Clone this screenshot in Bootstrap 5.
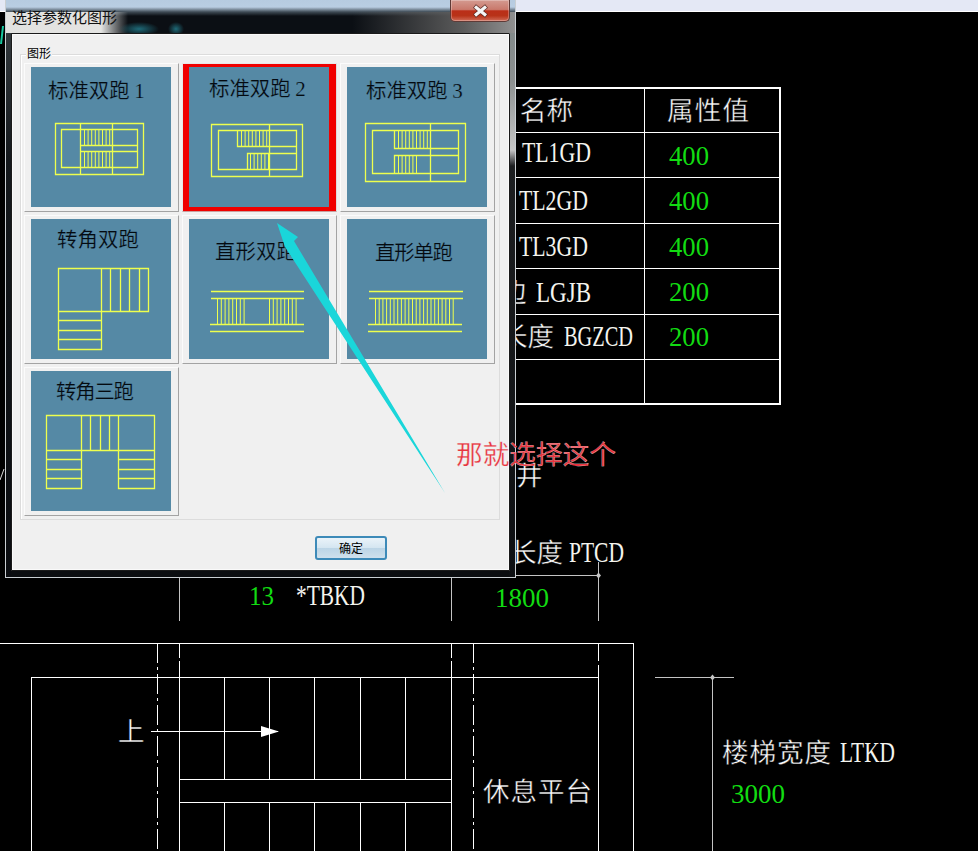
<!DOCTYPE html>
<html lang="zh-CN">
<head>
<meta charset="utf-8">
<title>选择参数化图形</title>
<link href="https://cdn.jsdelivr.net/npm/bootstrap@5.3.0/dist/css/bootstrap.min.css" rel="stylesheet">
<style>
html,body{margin:0;background:#000;}
.desk{position:relative;width:978px;height:851px;overflow:hidden;background:#000;font-family:"Noto Sans CJK SC","Liberation Sans",sans-serif;}
.strip{height:12px;background:#e4e8f5;border-bottom:1px solid #fff;}
.sheet{position:absolute;left:0;top:0;width:978px;height:851px;}
.sheet .ln{stroke:#fff;stroke-width:1;fill:none;shape-rendering:crispEdges;}
.sheet .ln2{stroke:#fff;stroke-width:2;fill:none;shape-rendering:crispEdges;}
.sheet .dim{stroke:#c4c4c4;stroke-width:1;fill:none;shape-rendering:crispEdges;}
.zh{font-family:"Noto Sans CJK SC",sans-serif;font-size:26.5px;fill:#fafafa;stroke:#000;stroke-width:.4px;}
.lat{font-family:"Liberation Serif",serif;font-size:29px;fill:#f4f4ee;}
.num{font-family:"Liberation Serif",serif;font-size:27.5px;fill:#12dc12;}
.say{font-family:"Noto Sans CJK SC",sans-serif;font-size:26.6px;fill:#e8343e;stroke:#f0f0f0;stroke-width:.25px;}
.dlg{position:absolute;left:5px;top:0;width:511px;height:578px;padding:0 5px 6px;border:1px solid #c9ced2;border-top:0;border-radius:0 0 6px 6px;
background:
 radial-gradient(ellipse 20px 7px at 133px 29px,#1f6a78,transparent),
 radial-gradient(ellipse 8px 7px at 170px 29px,#1f6a78,transparent),
 linear-gradient(90deg,#e2e2e0 0,#e4e4e2 95px,rgba(210,210,210,0) 122px) 0 12px/100% 21px no-repeat,
 linear-gradient(90deg,transparent 68%,#5c5c5c 90%,#909090 100%) 0 12px/100% 21px no-repeat,
 linear-gradient(180deg,#b6cbe0 0,#b9cde2 7px,#3e4a54 12px,#0b0f14 16px) 0 0/100% 33px no-repeat,
 linear-gradient(180deg,#7d8686 0,#8c9090 80px,#c6c6c6 150px,#1c1e20 166px,#0d0f12 100%) right 0/6px 100% no-repeat,
 linear-gradient(180deg,#3a4044 0,#14181c 160px,#0a0c10 100%) left 0/5px 100% no-repeat,
 #0b0d10;}
.dlg-head{height:33px;}
.dlg-name{font-size:15px;line-height:17px;color:#111;padding:8px 0 0 1px;}
.closer{width:60px;height:22px;padding:0;border:1px solid #5e3a36;border-top:0;border-radius:0 0 5px 5px;box-shadow:inset 0 0 0 1px rgba(255,255,255,.28);
background:linear-gradient(180deg,#d49a90 0,#c9796c 45%,#ba2e18 52%,#b83218 75%,#d06c58 100%);}
.closer svg{display:block;margin:0 auto;}
.dlg-panel{height:538px;background:#f0f0f0;border:1px solid #1a1a1a;box-shadow:inset 0 0 0 1px #fafafa;border-radius:1px;}
.gbox{position:relative;margin:20px 9px 0 8px;height:466px;padding:8px 0 0 3px;border:1px solid #dcdcdc;box-shadow:inset 1px 1px 0 #fff;}
.gbox-cap{position:absolute;left:5px;top:-10px;padding:0 1px;font-size:12px;line-height:16px;color:#000;background:#f0f0f0;}
.tiles{display:grid;grid-template-columns:repeat(3,155px);grid-auto-rows:149px;gap:3px;}
.tile{padding:3px 7px 4px 6px;border:1px solid;border-color:#fbfbfb #a3a3a3 #a3a3a3 #fbfbfb;background:#f0f0f0;}
.tile-on{background:#f00000;border-color:#e8e8e8 #dcdcdc #c8a0a0 #e8e8e8;}
.tile svg{display:block;width:140px;height:140px;background:#5589a5;}
.tile .y{stroke:#eeff4e;stroke-width:1.3;fill:none;}
.tile .bars{stroke:#eeff4e;fill:none;}
.tile text{font-family:"Noto Sans CJK SC",sans-serif;font-size:20.4px;fill:#040a10;stroke:#5589a5;stroke-width:.22px;}
.tile text .d{font-family:"Liberation Serif",serif;font-size:21px;}
.dlg-foot{padding:16px 122px 0 0;}
.okbtn{width:72px;height:24px;padding:0;font-size:12px;line-height:20px;color:#000;border:2px solid #3d8ab8;border-radius:3px;
background:linear-gradient(180deg,#eaf3f9 0,#d5e6f1 48%,#bcd5e6 52%,#cfe0ec 100%);}
.over{position:absolute;left:0;top:0;width:978px;height:851px;pointer-events:none;}
</style>
</head>
<body>
<div class="desk">
  <div class="strip"></div>

  <svg class="sheet" viewBox="0 0 978 851" xmlns="http://www.w3.org/2000/svg">
    <path d="M3 26 1 44" stroke="#18c8a0" stroke-width="2" fill="none"/>
    <path d="M4 469 0 480" stroke="#d8d8d8" stroke-width="1" fill="none"/>
    <!-- property table -->
    <path class="ln2" d="M400 87.5H780V404H400"/>
    <path class="ln" d="M644.5 87V404M400 132.5H780M400 177.5H780M400 223.5H780M400 268.5H780M400 314.5H780M400 359.5H780"/>
    <text class="zh" x="520" y="120">名称</text>
    <text class="zh" x="667" y="120"><tspan textLength="82">属性值</tspan></text>
    <text class="lat" x="522" y="162" textLength="69" lengthAdjust="spacingAndGlyphs">TL1GD</text>
    <text class="lat" x="519" y="210" textLength="69" lengthAdjust="spacingAndGlyphs">TL2GD</text>
    <text class="lat" x="519" y="256" textLength="69" lengthAdjust="spacingAndGlyphs">TL3GD</text>
    <text y="302"><tspan class="zh" x="500">边</tspan> <tspan class="lat" x="536" textLength="55" lengthAdjust="spacingAndGlyphs">LGJB</tspan></text>
    <text y="346"><tspan class="zh" x="501">长度</tspan> <tspan class="lat" x="564" textLength="69" lengthAdjust="spacingAndGlyphs">BGZCD</tspan></text>
    <text class="num" x="669" y="165" textLength="40" lengthAdjust="spacingAndGlyphs">400</text>
    <text class="num" x="669" y="210" textLength="40" lengthAdjust="spacingAndGlyphs">400</text>
    <text class="num" x="669" y="256" textLength="40" lengthAdjust="spacingAndGlyphs">400</text>
    <text class="num" x="669" y="301" textLength="40" lengthAdjust="spacingAndGlyphs">200</text>
    <text class="num" x="669" y="346" textLength="40" lengthAdjust="spacingAndGlyphs">200</text>
    <!-- upper labels and dimensions -->
    <text class="zh" x="516" y="485">井</text>
    <text y="562"><tspan class="zh" x="510">长度</tspan> <tspan class="lat" x="569" textLength="55" lengthAdjust="spacingAndGlyphs">PTCD</tspan></text>
    <path class="dim" d="M400 575.5H598M598.5 562V621M451.5 570V621M179.5 570V621"/>
    <path d="M598.5 572.5l2.5 3-2.5 3-2.5-3z" fill="#c4c4c4"/>
    <text class="num" x="249" y="605" textLength="25" lengthAdjust="spacingAndGlyphs">13</text>
    <text class="lat" x="296" y="605" textLength="69" lengthAdjust="spacingAndGlyphs">*TBKD</text>
    <text class="num" x="495" y="607" textLength="54" lengthAdjust="spacingAndGlyphs">1800</text>
    <!-- stair plan -->
    <path class="ln" d="M0 643.5H633.5V851M31.5 851V677.5H598.5"/>
    <path class="ln" stroke-dasharray="18 4 200" d="M598.5 643V851"/>
    <path class="ln" stroke-dasharray="20 4 3 4" d="M157.5 643V851"/>
    <path class="ln" stroke-dasharray="20 4 3 4" d="M473.5 643V851"/>
    <path class="ln" stroke-dasharray="15 3 300" d="M179.5 643V851"/>
    <path class="ln" stroke-dasharray="15 3 300" d="M451.5 643V851"/>
    <path class="ln" d="M224.5 677V779M269.5 677V779M314.5 677V779M360.5 677V779M405.5 677V779M224.5 802V851M269.5 802V851M314.5 802V851M360.5 802V851M405.5 802V851M179 779.5H451M179 802.5H451"/>
    <text class="zh" x="118" y="741">上</text>
    <path class="ln" d="M151 731.5H278"/>
    <path d="M261 726l18 5.5-18 5.5z" fill="#fff"/>
    <text class="zh" x="483" y="801" textLength="109">休息平台</text>
    <path class="dim" d="M655 677.5H734M712.5 677V851"/>
    <path d="M712.5 674.5l2.5 3-2.5 3-2.5-3z" fill="#c4c4c4"/>
    <text y="762"><tspan class="zh" x="722" textLength="109">楼梯宽度</tspan> <tspan class="lat" x="840" textLength="55" lengthAdjust="spacingAndGlyphs">LTKD</tspan></text>
    <text class="num" x="731" y="803" textLength="54" lengthAdjust="spacingAndGlyphs">3000</text>
  </svg>

  <div class="dlg card rounded-0">
    <div class="dlg-head d-flex justify-content-between align-items-start">
      <div class="dlg-name">选择参数化图形</div>
      <button type="button" class="closer" aria-label="关闭">
        <svg width="17" height="14" viewBox="0 0 17 14"><path d="M2.5 2 14.5 12M14.5 2 2.5 12" stroke="#5a2a24" stroke-width="4.4" fill="none"/><path d="M3 2.5 14 11.5M14 2.5 3 11.5" stroke="#f6f6f6" stroke-width="3.2" fill="none"/></svg>
      </button>
    </div>
    <div class="dlg-panel">
      <div class="gbox">
        <div class="gbox-cap">图形</div>
        <div class="tiles">
          <div class="tile">
            <svg viewBox="31 67 140 140"><text x="48" y="98">标准双跑 <tspan class="d">1</tspan></text>
              <path class="y" d="M55.5 123.5H143.5V174.5H55.5ZM61.5 129.5H137.5V167.5H61.5ZM80.5 123V174M112.5 123V174M80 145.5H137.5M80 151.5H137.5"/>
              <line class="bars" x1="84" x2="112" y1="137.5" y2="137.5" stroke-width="16" stroke-dasharray="1 2.6"/>
              <line class="bars" x1="84" x2="112" y1="159.5" y2="159.5" stroke-width="16" stroke-dasharray="1 2.6"/></svg>
          </div>
          <div class="tile tile-on">
            <svg viewBox="189 67 140 140"><text x="209" y="96">标准双跑 <tspan class="d">2</tspan></text>
              <path class="y" d="M211.5 124.5H302.5V176.5H211.5ZM218.5 130.5H296.5V169.5H218.5ZM269.5 124V176M237.5 130V146.5H296M247.5 169V153.5H296"/>
              <line class="bars" x1="241" x2="269" y1="138.5" y2="138.5" stroke-width="16" stroke-dasharray="1 2.6"/>
              <line class="bars" x1="250" x2="269" y1="161.5" y2="161.5" stroke-width="16" stroke-dasharray="1 2.6"/></svg>
          </div>
          <div class="tile">
            <svg viewBox="347 67 140 140"><text x="366" y="98">标准双跑 <tspan class="d">3</tspan></text>
              <path class="y" d="M365.5 123.5H465.5V181.5H365.5ZM372.5 130.5H458.5V173.5H372.5ZM430.5 123V182M394.5 130V148.5H458M394.5 173V155.5H458"/>
              <line class="bars" x1="398" x2="431" y1="139" y2="139" stroke-width="18" stroke-dasharray="1 2.6"/>
              <line class="bars" x1="398" x2="417" y1="164" y2="164" stroke-width="18" stroke-dasharray="1 2.6"/></svg>
          </div>
          <div class="tile">
            <svg viewBox="31 219 140 140"><text x="57" y="247" textLength="82">转角双跑</text>
              <path class="y" d="M58.5 268.5H148.5V311.5H58.5ZM58.5 311V349.5H101.5V268M110.5 268V311M120.5 268V311M129.5 268V311M139.5 268V311M58 320.5H101M58 330.5H101M58 339.5H101"/></svg>
          </div>
          <div class="tile">
            <svg viewBox="189 219 140 140"><text x="215" y="259" textLength="82">直形双跑</text>
              <path class="y" d="M211 291.5H304M211 298.5H304M210 324.5H304M210 331.5H304"/>
              <line class="bars" x1="217" x2="245" y1="311.5" y2="311.5" stroke-width="26" stroke-dasharray="1 2.8"/>
              <line class="bars" x1="269" x2="297" y1="311.5" y2="311.5" stroke-width="26" stroke-dasharray="1 2.8"/></svg>
          </div>
          <div class="tile">
            <svg viewBox="347 219 140 140"><text x="375" y="260" textLength="78">直形单跑</text>
              <path class="y" d="M369 291.5H463M369 298.5H463M368 324.5H462M368 331.5H462"/>
              <line class="bars" x1="375" x2="456" y1="311.5" y2="311.5" stroke-width="26" stroke-dasharray="1 2.7"/></svg>
          </div>
          <div class="tile">
            <svg viewBox="31 371 140 140"><text x="56" y="399" textLength="78">转角三跑</text>
              <path class="y" d="M46.5 415.5H154.5V450.5H46.5ZM46.5 450V488.5H81.5V415M118.5 415V488.5H154.5V450M90.5 415V450M100.5 415V450M109.5 415V450M46 459.5H81M46 469.5H81M46 478.5H81M118 459.5H154M118 469.5H154M118 478.5H154"/></svg>
          </div>
        </div>
      </div>
      <div class="dlg-foot d-flex justify-content-end">
        <button type="button" class="btn okbtn">确定</button>
      </div>
    </div>
  </div>

  <svg class="over" viewBox="0 0 978 851" xmlns="http://www.w3.org/2000/svg">
    <polygon points="277,223 298,237 294,241 445,493 285,247" fill="#1ad6da"/>
    <text class="say" x="456" y="464" textLength="160">那就选择这个</text>
  </svg>
</div>
<script src="https://cdn.jsdelivr.net/npm/bootstrap@5.3.0/dist/js/bootstrap.bundle.min.js"></script>
</body>
</html>
